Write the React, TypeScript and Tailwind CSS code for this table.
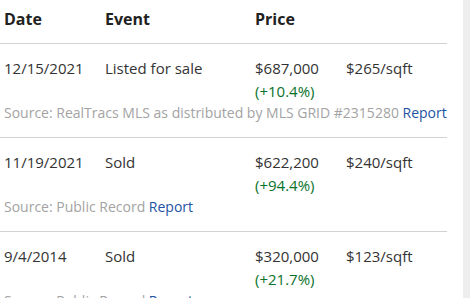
const rows = [
  { date: '12/15/2021', event: 'Listed for sale', price: '$687,000', change: '(+10.4%)', sqft: '$265/sqft', source: 'RealTracs MLS as distributed by MLS GRID #2315280' },
  { date: '11/19/2021', event: 'Sold', price: '$622,200', change: '(+94.4%)', sqft: '$240/sqft', source: 'Public Record' },
  { date: '9/4/2014', event: 'Sold', price: '$320,000', change: '(+21.7%)', sqft: '$123/sqft', source: 'Public Record' },
];

export default function App() {
  return (
    <div className="flex h-[298px] w-[470px] overflow-hidden bg-white" style={{ fontFamily: '"Open Sans", sans-serif' }}>
      <div className="w-[463px] pr-[16px]">
        {/* header */}
        <div className="grid grid-cols-[101px_150px_91px_1fr] border-b border-[#d2d2d2] pl-[4px] pt-[8px] pb-[13px] text-[16px] leading-[22px] font-bold text-[#222]">
          <div>Date</div>
          <div>Event</div>
          <div>Price</div>
          <div></div>
        </div>
        {rows.map((r) => (
          <div key={r.date} className="border-b border-[#d2d2d2] pl-[4px] pt-[13px] pb-[14px]">
            <div className="grid grid-cols-[101px_150px_91px_1fr] text-[15px] leading-[23px] text-[#333]">
              <div>{r.date}</div>
              <div>{r.event}</div>
              <div>
                <div>{r.price}</div>
                <div className="text-[#0a712a]">{r.change}</div>
              </div>
              <div>{r.sqft}</div>
            </div>
            <div className="text-[14px] leading-[20px] text-[#a3a3a3] whitespace-nowrap">
              Source: {r.source} <span className="text-[#2152a3]">Report</span>
            </div>
          </div>
        ))}
      </div>
      <div className="w-[7px] bg-[#eeeeee]" />
    </div>
  );
}
